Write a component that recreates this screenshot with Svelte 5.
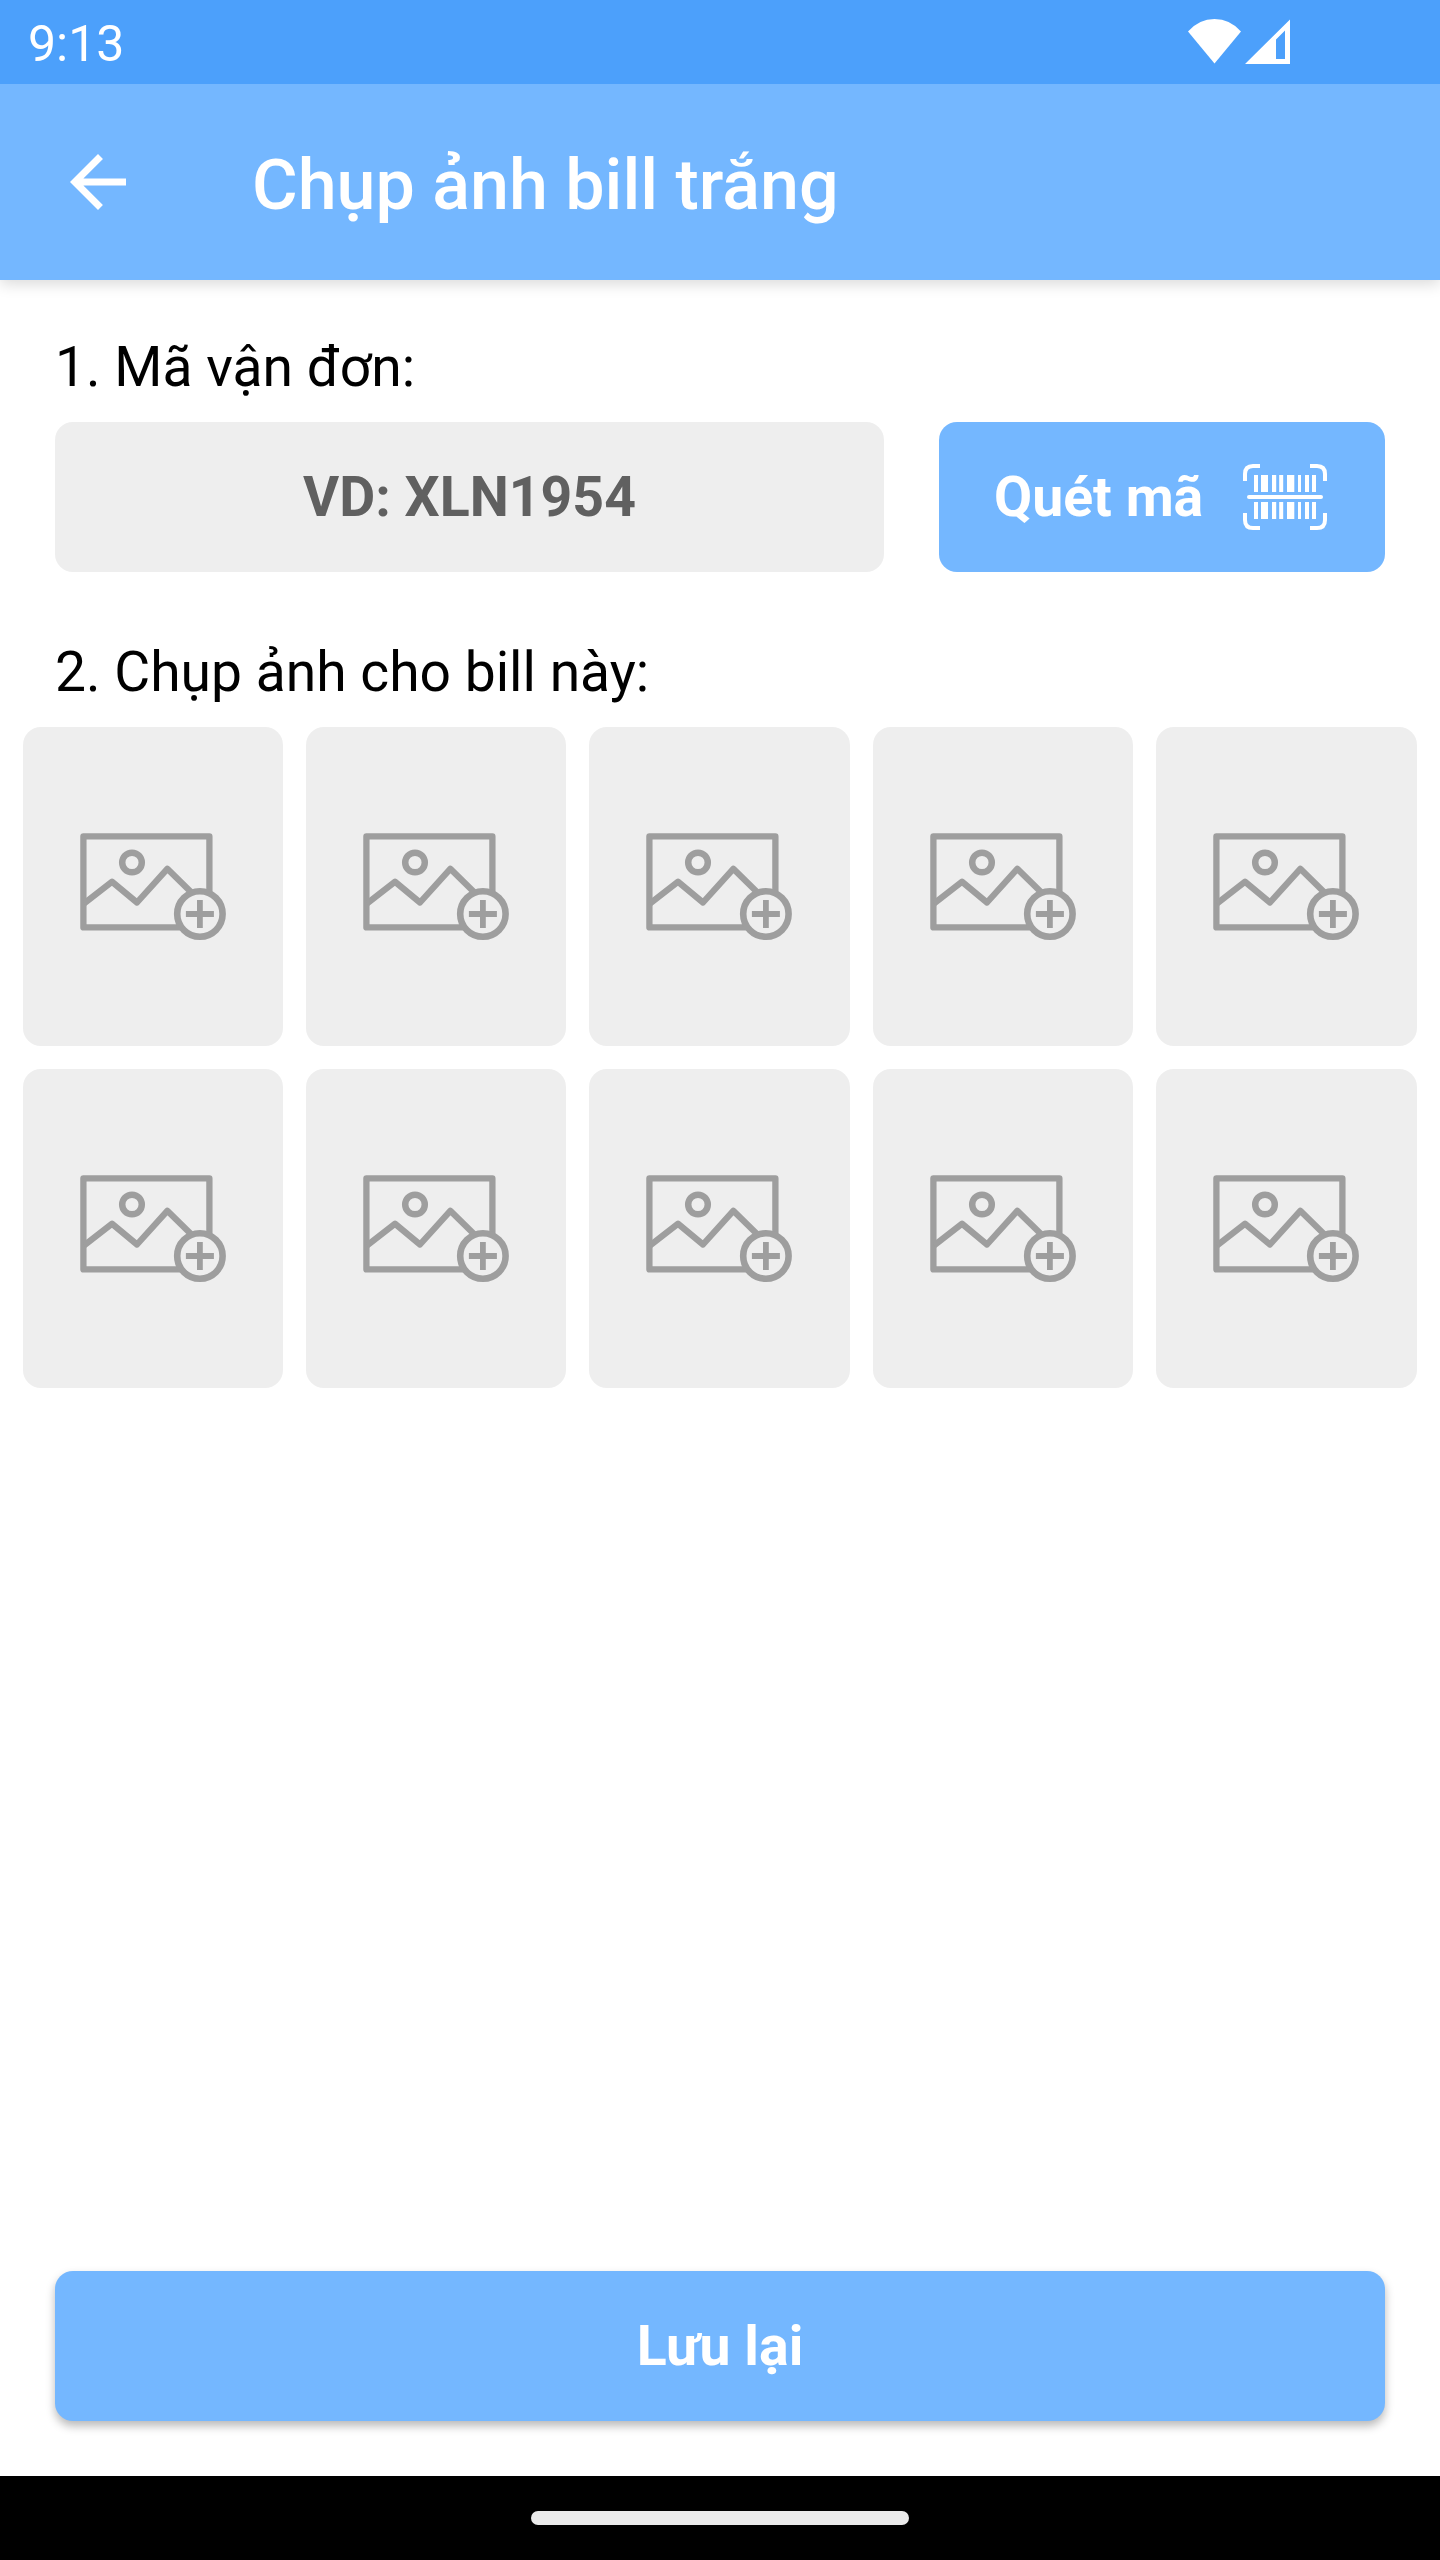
<script lang="ts">
	export let title: string = "Chụp ảnh bill trắng";
	export let time: string = "9:13";
	export let code: string = "XLN1954";

	const slots = Array.from({ length: 10 }, (_, i) => i);

	// [x, width] of every bar in the barcode icon
	const bars = [
		[11, 4],
		[18, 7],
		[29, 4.2],
		[36.2, 4],
		[44, 7.3],
		[55, 3],
		[62, 4],
		[69, 4],
	];
</script>

<div class="screen">
	<div class="status">
		<span>{time}</span>
		<svg width="102" height="46" viewBox="0 0 102 46" fill="#fff">
			<path d="M0 12.5Q11 0 26.5 0T53 12.5L26.5 44.5Z" />
			<path fill-rule="evenodd" d="M102 .5V45H57ZM97 11.5L88 20.5V40H97Z" />
		</svg>
	</div>

	<header>
		<button class="back" aria-label="Quay lại">
			<svg width="84" height="84" viewBox="0 0 24 24" fill="#fff">
				<path d="M20 11H7.83l5.59-5.59L12 4l-8 8 8 8 1.41-1.41L7.83 13H20v-2z" />
			</svg>
		</button>
		<h1>{title}</h1>
	</header>

	<main>
		<p class="label">1. Mã vận đơn:</p>
		<div class="row">
			<div class="code">VD: {code}</div>
			<button class="scan">
				<span>Quét mã</span>
				<svg width="84" height="66" viewBox="0 0 84 66" fill="#fff">
					<g fill="none" stroke="#fff" stroke-width="4">
						<path d="M2 17V10Q2 2 10 2H17M67 2H74Q82 2 82 10V17M82 49V56Q82 64 74 64H67M17 64H10Q2 64 2 56V49" />
						<path d="M6 33H78" stroke-linecap="round" />
					</g>
					{#each bars as [x, w]}
						<rect {x} y="11" width={w} height="17" />
						<rect {x} y="38" width={w} height="17" />
					{/each}
				</svg>
			</button>
		</div>

		<p class="label second">2. Chụp ảnh cho bill này:</p>
		<div class="grid">
			{#each slots as slot (slot)}
				<div class="tile">
					<svg width="146" height="107" viewBox="0 0 146 107" fill="none" stroke="#9e9e9e" stroke-width="6.3">
						<rect x="3.4" y="3.4" width="126" height="91" stroke-linejoin="round" />
						<circle cx="52" cy="29.5" r="9.8" stroke-width="6.5" />
						<path d="M4 70.5L32 48.8L57 69.5L87.3 35.8L112 60" stroke-linejoin="round" />
						<circle cx="119.9" cy="81" r="22.7" fill="#eee" stroke-width="6.6" />
						<path d="M105.9 81H133.9M119.9 67V95" stroke-width="5.8" />
					</svg>
				</div>
			{/each}
		</div>
	</main>

	<footer>
		<button class="save">Lưu lại</button>
	</footer>

	<div class="nav">
		<div class="pill"></div>
	</div>
</div>

<style>
	:global(body) {
		margin: 0;
		background: #fff;
	}

	.screen {
		display: flex;
		flex-direction: column;
		width: 1440px;
		height: 2560px;
		font-family: Roboto, "Noto Sans", sans-serif;
		background: #fff;
		overflow: hidden;
	}

	svg {
		display: block;
		flex: none;
	}

	button {
		border: 0;
		padding: 0;
		font-family: inherit;
		color: #fff;
		background: #74b7ff;
	}

	/* sits above the header so its shadow only falls downwards */
	.status {
		position: relative;
		z-index: 1;
		display: flex;
		justify-content: space-between;
		box-sizing: border-box;
		height: 84px;
		padding: 19px 150px 0 28px;
		background: #4ca0fb;
	}

	.status span {
		margin-top: -3px;
		font-size: 50px;
		line-height: 57px;
		color: #fff;
	}

	header {
		display: flex;
		align-items: center;
		height: 196px;
		background: #74b7ff;
		box-shadow: 0 4px 14px rgba(0, 0, 0, 0.15);
	}

	.back {
		margin-left: 56px;
	}

	h1 {
		margin: 6px 0 0 112px;
		font-size: 70px;
		font-weight: 500;
		line-height: 82px;
		color: #fff;
	}

	main {
		flex: 1;
		padding-top: 54px;
	}

	.label {
		margin: 0 55px 22px;
		font-size: 55.2px;
		line-height: 66px;
		color: #000;
	}

	.second {
		margin-top: 67px;
	}

	.row {
		display: flex;
		gap: 55px;
		padding: 0 55px;
	}

	.code,
	.scan,
	.save {
		height: 150px;
		border-radius: 18px;
		font-size: 55.4px;
		font-weight: 700;
	}

	.code {
		flex: 1;
		line-height: 152px;
		text-align: center;
		color: #606060;
		background: #eee;
	}

	.scan {
		display: flex;
		align-items: center;
		justify-content: space-between;
		box-sizing: border-box;
		width: 446px;
		padding: 0 58px 0 55px;
	}

	.grid {
		display: grid;
		grid-template-columns: repeat(4, 260.2px) 1fr;
		grid-auto-rows: 319px;
		gap: 23px;
		padding: 0 23px;
	}

	.tile {
		display: flex;
		align-items: center;
		justify-content: center;
		border-radius: 18px;
		background: #eee;
	}

	footer {
		padding: 0 55px 55px;
	}

	.save {
		display: block;
		width: 100%;
		box-shadow: 0 5px 10px rgba(0, 0, 0, 0.28);
	}

	.nav {
		display: flex;
		align-items: center;
		justify-content: center;
		height: 84px;
		background: #000;
	}

	.pill {
		width: 378px;
		height: 14px;
		border-radius: 7px;
		background: #ebebeb;
	}
</style>
